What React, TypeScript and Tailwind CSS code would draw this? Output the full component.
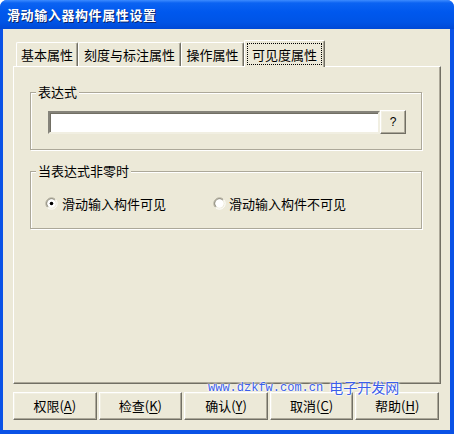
import React from "react";

const cjk = "font-['SimSun','Noto_Sans_CJK_SC',sans-serif]";

const Mnemonic = ({ label, k }: { label: string; k: string }) => (
  <span>
    {label}(<span className="underline underline-offset-2">{k}</span>)
  </span>
);

const RaisedButton = ({ children, className = "" }: { children: React.ReactNode; className?: string }) => (
  <button
    className={`flex items-center justify-center bg-[#ECE9D8] text-black border border-t-white border-l-white border-r-[#716F64] border-b-[#716F64] shadow-[inset_-1px_-1px_0_#ACA899,inset_1px_1px_0_#F1EFE2] ${className}`}
  >
    {children}
  </button>
);

const Radio = ({ checked }: { checked?: boolean }) => (
  <svg width="13" height="13" viewBox="0 0 13 13" className="shrink-0">
    <path d="M2.5 10.5 A5.5 5.5 0 0 1 10.5 2.5" fill="none" stroke="#ACA899" strokeWidth="1" />
    <path d="M3.2 9.8 A4.6 4.6 0 0 1 9.8 3.2" fill="none" stroke="#716F64" strokeWidth="1" />
    <circle cx="6.5" cy="6.5" r="4.2" fill="white" />
    <path d="M10.5 2.5 A5.5 5.5 0 0 1 2.5 10.5" fill="none" stroke="#FFFFFF" strokeWidth="1" />
    {checked && <circle cx="6.5" cy="6.5" r="1.8" fill="black" />}
  </svg>
);

const tabs = [
  { label: "基本属性", w: "w-[62px]" },
  { label: "刻度与标注属性", w: "w-[103px]" },
  { label: "操作属性", w: "w-[63px]" },
];

export default function App() {
  return (
    <div className={`w-[454px] h-[434px] flex flex-col rounded-t-[7px] overflow-hidden bg-[#0A52E6] text-[13px] text-black ${cjk}`}>
      {/* title bar */}
      <div className="h-[29px] shrink-0 flex items-center pl-[7px] bg-[linear-gradient(to_bottom,#3D8BFF_0px,#0B63F2_3px,#0058EE_12px,#0054E6_22px,#0049D6_29px)]">
        <span className="text-white font-bold text-[13px] leading-none tracking-[0.6px] [text-shadow:1px_1px_0_#0A246A]">
          滑动输入器构件属性设置
        </span>
      </div>

      {/* client area */}
      <div className="relative flex-1 ml-[3px] mr-[4px] mb-[4px] bg-[#ECE9D8] pt-[11px] pl-[10px]">
        {/* tabs */}
        <div className="flex items-end h-[26px] pl-[3px]">
          {tabs.map((t) => (
            <div
              key={t.label}
              className={`${t.w} h-[24px] flex items-center justify-center border-t border-l border-t-white border-l-white border-r border-r-[#716F64] rounded-t-[2px] shadow-[inset_-1px_0_0_#ACA899] leading-[15px]`}
            >
              {t.label}
            </div>
          ))}
          <div className="relative z-10 w-[81px] h-[27px] -mb-[1px] flex items-start justify-center pt-[2px] bg-[#ECE9D8] border-t border-l border-t-white border-l-white border-r border-r-[#716F64] rounded-t-[2px] shadow-[inset_-1px_0_0_#ACA899]">
            <div className="w-[75px] h-[22px] flex items-center justify-center border border-dotted border-black leading-[15px]">
              可见度属性
            </div>
          </div>
        </div>

        {/* tab panel */}
        <div className="w-[428px] h-[318px] border border-t-white border-l-white border-r-[#716F64] border-b-[#716F64] shadow-[inset_-1px_-1px_0_#ACA899] pl-[16px]">
          <fieldset className="mt-[18px] w-[392px] border border-[#ACA899] shadow-[inset_1px_1px_0_white,1px_1px_0_white]">
            <legend className="ml-[5px] px-[2px] leading-[14px] bg-[#ECE9D8]">表达式</legend>
            <div className="flex items-center pt-[11px] pb-[15px] pl-[17px]">
              <div className="w-[332px] h-[23px] bg-white border-2 border-t-[#85837A] border-l-[#85837A] border-r-[#F1EFE2] border-b-[#F1EFE2] shadow-[inset_1px_1px_0_#716F64]" />
              <RaisedButton className="w-[26px] h-[24px] text-[12px] font-['Liberation_Sans',sans-serif]">?</RaisedButton>
            </div>
          </fieldset>

          <fieldset className="mt-[14px] w-[392px] border border-[#ACA899] shadow-[inset_1px_1px_0_white,1px_1px_0_white]">
            <legend className="ml-[5px] px-[2px] leading-[14px] bg-[#ECE9D8]">当表达式非零时</legend>
            <div className="flex items-center h-[16px] mt-[17px] mb-[17px] pl-[14px]">
              <label className="w-[168px] flex items-center gap-[4px] leading-[15px]">
                <Radio checked />
                滑动输入构件可见
              </label>
              <label className="flex items-center gap-[3px] leading-[15px]">
                <Radio />
                滑动输入构件不可见
              </label>
            </div>
          </fieldset>
        </div>

        {/* dialog buttons */}
        <div className="mt-[8px] w-[426px] grid grid-cols-5 gap-[2px]">
          <RaisedButton className="h-[28px]"><Mnemonic label="权限" k="A" /></RaisedButton>
          <RaisedButton className="h-[28px]"><Mnemonic label="检查" k="K" /></RaisedButton>
          <RaisedButton className="h-[28px]"><Mnemonic label="确认" k="Y" /></RaisedButton>
          <RaisedButton className="h-[28px]"><Mnemonic label="取消" k="C" /></RaisedButton>
          <RaisedButton className="h-[28px]"><Mnemonic label="帮助" k="H" /></RaisedButton>
        </div>

        {/* site watermark */}
        <div className="absolute left-[205px] top-[350px] flex items-end gap-[6px] text-[#3B5EEA] [text-shadow:0_0_2px_#fff,0_0_2px_#fff,0_0_3px_#fff]">
          <span className="font-['Liberation_Mono',monospace] text-[12px] leading-[14px]">www.dzkfw.com.cn</span>
          <span className="text-[14px] leading-[16px]">电子开发网</span>
        </div>
      </div>
    </div>
  );
}
